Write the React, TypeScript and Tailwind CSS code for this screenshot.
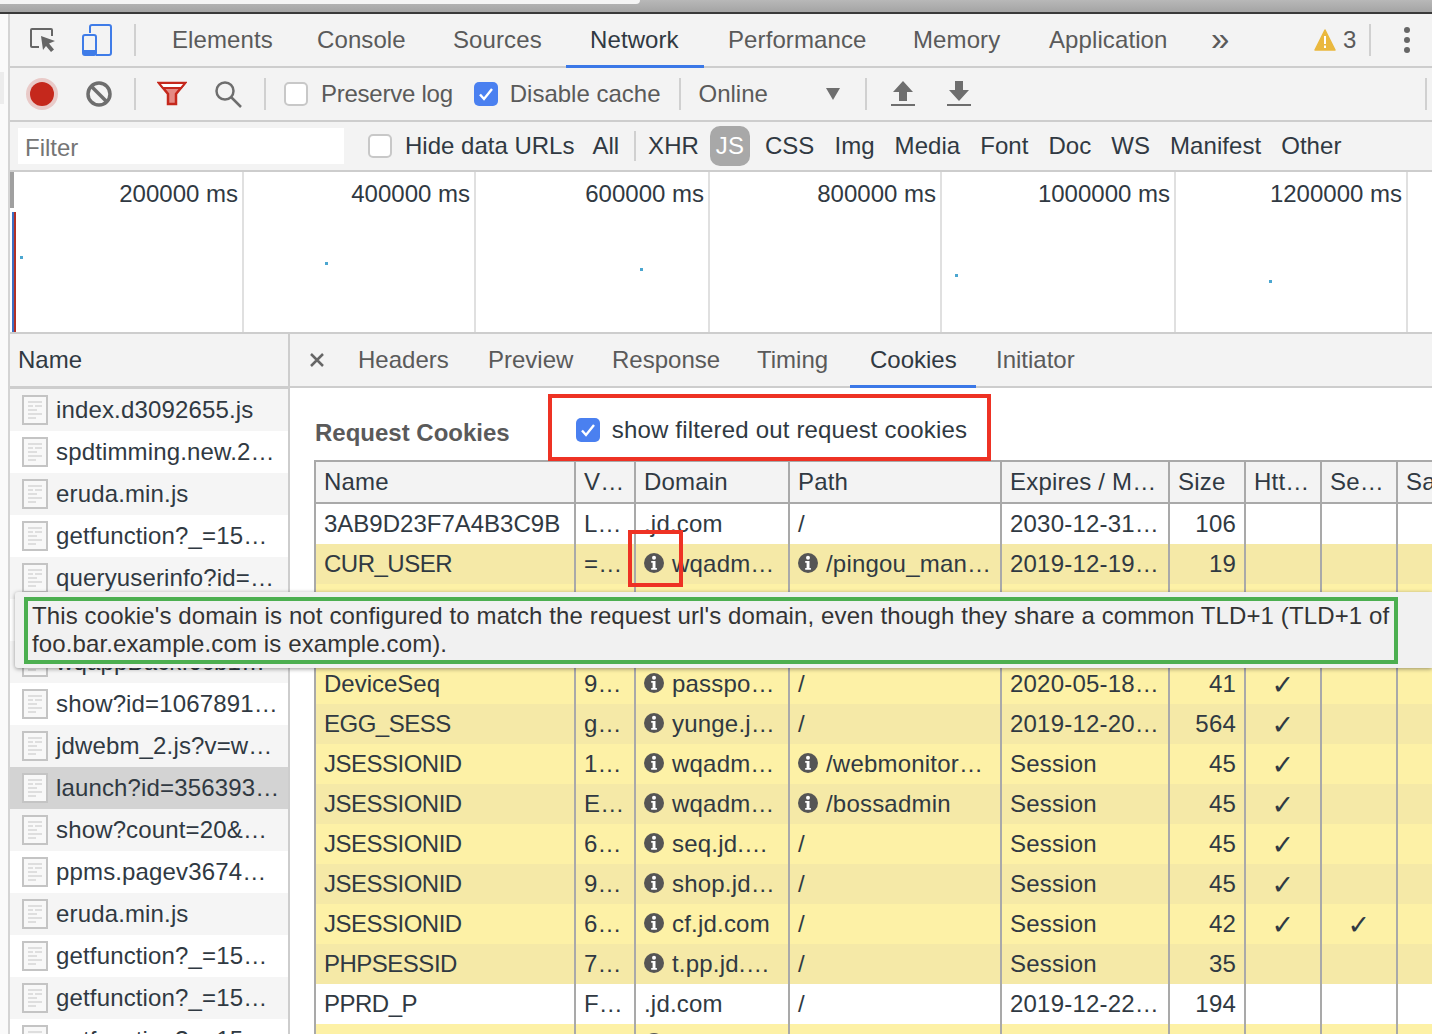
import type { ReactNode } from "react";

const listItems = [
  "index.d3092655.js",
  "spdtimming.new.2…",
  "eruda.min.js",
  "getfunction?_=15…",
  "queryuserinfo?id=…",
  "",
  "wqappBack.6cb1…",
  "show?id=1067891…",
  "jdwebm_2.js?v=w…",
  "launch?id=356393…",
  "show?count=20&…",
  "ppms.pagev3674…",
  "eruda.min.js",
  "getfunction?_=15…",
  "getfunction?_=15…",
  "getfunction?_=15…",
];

type Cookie = {
  name: string;
  value: string;
  domain: string;
  domainInfo?: boolean;
  path: string;
  pathInfo?: boolean;
  expires: string;
  size: string;
  http?: boolean;
  secure?: boolean;
  bg: string;
};

const WHITE = "bg-white";
const LIGHT = "bg-[#fdf1a6]";
const DARK = "bg-[#f5e9a7]";

const cookies: Cookie[] = [
  { name: "3AB9D23F7A4B3C9B", value: "L…", domain: ".jd.com", path: "/", expires: "2030-12-31…", size: "106", bg: WHITE },
  { name: "CUR_USER", value: "=…", domain: "wqadm…", domainInfo: true, path: "/pingou_man…", pathInfo: true, expires: "2019-12-19…", size: "19", bg: DARK },
  { name: "", value: "", domain: "", path: "", expires: "", size: "", bg: LIGHT },
  { name: "", value: "", domain: "", path: "", expires: "", size: "", bg: DARK },
  { name: "DeviceSeq", value: "9…", domain: "passpo…", domainInfo: true, path: "/", expires: "2020-05-18…", size: "41", http: true, bg: LIGHT },
  { name: "EGG_SESS", value: "g…", domain: "yunge.j…", domainInfo: true, path: "/", expires: "2019-12-20…", size: "564", http: true, bg: DARK },
  { name: "JSESSIONID", value: "1…", domain: "wqadm…", domainInfo: true, path: "/webmonitor…", pathInfo: true, expires: "Session", size: "45", http: true, bg: LIGHT },
  { name: "JSESSIONID", value: "E…", domain: "wqadm…", domainInfo: true, path: "/bossadmin", pathInfo: true, expires: "Session", size: "45", http: true, bg: DARK },
  { name: "JSESSIONID", value: "6…", domain: "seq.jd.…", domainInfo: true, path: "/", expires: "Session", size: "45", http: true, bg: LIGHT },
  { name: "JSESSIONID", value: "9…", domain: "shop.jd…", domainInfo: true, path: "/", expires: "Session", size: "45", http: true, bg: DARK },
  { name: "JSESSIONID", value: "6…", domain: "cf.jd.com", domainInfo: true, path: "/", expires: "Session", size: "42", http: true, secure: true, bg: LIGHT },
  { name: "PHPSESSID", value: "7…", domain: "t.pp.jd.…", domainInfo: true, path: "/", expires: "Session", size: "35", bg: DARK },
  { name: "PPRD_P", value: "F…", domain: ".jd.com", path: "/", expires: "2019-12-22…", size: "194", bg: WHITE },
  { name: "", value: "", domain: "", domainInfo: true, path: "", expires: "", size: "", bg: LIGHT },
];

const gridCols = "grid grid-cols-[260px_60px_154px_212px_168px_76px_76px_76px_60px]";

function InfoIcon() {
  return (
    <svg width="20" height="20" viewBox="0 0 20 20" className="-mt-[3px] shrink-0">
      <circle cx="10" cy="10" r="10" fill="#555" />
      <circle cx="10" cy="4.8" r="2" fill="#fff" />
      <path d="M7.2 8h4.3v7h1.400v1.700H7.2V15h1.400V9.700H7.2z" fill="#fff" />
    </svg>
  );
}

function DocIcon() {
  return (
    <svg width="26" height="30" viewBox="0 0 26 30" className="shrink-0">
      <rect x="1" y="1" width="24" height="28" fill="#f8f8f8" stroke="#c4c4c4" strokeWidth="2" />
      <path d="M6 7h14M6 11h5M13 11h7M6 15h9M6 19h14M6 23h8" stroke="#dedede" strokeWidth="2" />
    </svg>
  );
}

function Checkbox({ checked, className = "" }: { checked?: boolean; className?: string }) {
  if (checked) {
    return (
      <span className={`flex h-6 w-6 shrink-0 items-center justify-center rounded-[5px] bg-[#4a80f0] ${className}`}>
        <svg width="16" height="14" viewBox="0 0 16 14">
          <path d="M2 7.500l4 4.500L14 2" fill="none" stroke="#fff" strokeWidth="2.400" />
        </svg>
      </span>
    );
  }
  return <span className={`h-6 w-6 shrink-0 rounded-[5px] border-2 border-[#c8c8c8] bg-white ${className}`} />;
}

function Divider({ className = "" }: { className?: string }) {
  return <span className={`h-8 w-0.5 shrink-0 bg-[#d0d0d0] ${className}`} />;
}

function Cell({ children, right, center }: { children?: ReactNode; right?: boolean; center?: boolean }) {
  return (
    <div
      className={`flex h-10 items-center gap-2 overflow-hidden whitespace-nowrap border-r-2 border-[#a9a9a9] pl-2 pr-2 tracking-[0.2px] ${
        right ? "justify-end" : ""
      } ${center ? "justify-center pl-0 pr-0" : ""}`}
    >
      {children}
    </div>
  );
}

function Check() {
  return <span className="font-['DejaVu_Sans',sans-serif] text-[27px] font-bold leading-none text-[#303942]">✓</span>;
}

export default function App() {
  const mainTabs = [
    { label: "Elements", w: "w-[145px]" },
    { label: "Console", w: "w-[136px]" },
    { label: "Sources", w: "w-[137px]" },
    { label: "Network", w: "w-[138px]" },
    { label: "Performance", w: "w-[185px]" },
    { label: "Memory", w: "w-[136px]" },
    { label: "Application", w: "w-[186px]" },
  ];
  const filterTypes = ["XHR", "JS", "CSS", "Img", "Media", "Font", "Doc", "WS", "Manifest", "Other"];
  const subTabs = [
    { label: "Headers", w: "w-[130px]" },
    { label: "Preview", w: "w-[124px]" },
    { label: "Response", w: "w-[145px]" },
    { label: "Timing", w: "w-[113px]" },
    { label: "Cookies", w: "w-[126px]" },
    { label: "Initiator", w: "w-[124px]" },
  ];
  const ticks = [
    { label: "200000 ms", w: "w-[234px]" },
    { label: "400000 ms", w: "w-[232px]" },
    { label: "600000 ms", w: "w-[234px]" },
    { label: "800000 ms", w: "w-[232px]" },
    { label: "1000000 ms", w: "w-[234px]" },
    { label: "1200000 ms", w: "w-[232px]" },
  ];
  const dots = [
    { x: "left-[10px]", y: "top-[84px]" },
    { x: "left-[315px]", y: "top-[90px]" },
    { x: "left-[630px]", y: "top-[96px]" },
    { x: "left-[945px]", y: "top-[102px]" },
    { x: "left-[1259px]", y: "top-[108px]" },
  ];

  return (
    <div className="relative h-[1034px] w-[1432px] overflow-hidden bg-white font-['Liberation_Sans',Arial,sans-serif] text-[24px] text-[#303942]">
      {/* browser chrome edge */}
      <div className="relative h-[14px] border-b-2 border-[#3a3a3a] bg-gradient-to-b from-[#b8b8b8] to-[#a4a4a4]">
        <div className="absolute left-0 top-0 h-[4px] w-[640px] rounded-br-lg bg-[#f4f4f4]" />
      </div>

      <div className="flex h-[1020px]">
        <div className="w-[10px] shrink-0 border-r-2 border-[#d4d4d4] bg-[#fafafa] pt-[58px]">
          <div className="h-[32px] w-[4px] bg-[#ececec]" />
        </div>

        <div className="flex min-w-0 flex-1 flex-col">
          {/* main tabs */}
          <div className="flex h-[54px] items-center border-b-2 border-[#cdcdcd] bg-[#f3f3f3] tracking-[0.1px] text-[#5a5a5a]">
            <svg width="28" height="28" viewBox="0 0 28 28" className="ml-[19px] shrink-0">
              <path d="M10 21H3a1 1 0 0 1-1-1V4a1 1 0 0 1 1-1h19a1 1 0 0 1 1 1v6" fill="none" stroke="#666" strokeWidth="2" />
              <path d="M12 10l14 5-6 2.500 5 6-3 2.500-5-6-3 4z" fill="#666" />
            </svg>
            <svg width="30" height="32" viewBox="0 0 30 32" className="ml-[25px] shrink-0">
              <path d="M8 9V3a2 2 0 0 1 2-2h17a2 2 0 0 1 2 2v26a2 2 0 0 1-2 2H14" fill="none" stroke="#3f7ce8" strokeWidth="2" />
              <rect x="1" y="11" width="13" height="20" rx="2" fill="none" stroke="#3f7ce8" strokeWidth="2" />
              <rect x="1" y="26" width="13" height="5" fill="#3f7ce8" />
            </svg>
            <Divider className="ml-[22px]" />
            <div className="ml-[12px] flex h-full">
              {mainTabs.map((tab) => (
                <div
                  key={tab.label}
                  className={`relative flex h-[54px] items-center pb-[2px] pl-6 ${tab.w} ${tab.label === "Network" ? "text-[#303942]" : ""}`}
                >
                  {tab.label}
                  {tab.label === "Network" && <span className="absolute inset-x-0 bottom-0 h-[3px] bg-[#3b78e7]" />}
                </div>
              ))}
            </div>
            <span className="w-[103px] pb-[4px] text-[33px] leading-none">»</span>
            <svg width="22" height="22" viewBox="0 0 22 22" className="shrink-0">
              <path d="M11 1l10 20H1z" fill="#eab83e" stroke="#eab83e" strokeWidth="1.500" strokeLinejoin="round" />
              <path d="M10 7h2v8h-2zM10 16.500h2v2.500h-2z" fill="#fff" />
            </svg>
            <span className="ml-[7px]">3</span>
            <Divider className="ml-[13px]" />
            <div className="ml-[33px] flex flex-col gap-1">
              <span className="h-[6px] w-[6px] rounded-full bg-[#666]" />
              <span className="h-[6px] w-[6px] rounded-full bg-[#666]" />
              <span className="h-[6px] w-[6px] rounded-full bg-[#666]" />
            </div>
          </div>

          {/* toolbar */}
          <div className="flex h-[54px] items-center border-b-2 border-[#cdcdcd] bg-[#f3f3f3] text-[#5a5a5a]">
            <span className="ml-[20px] h-6 w-6 shrink-0 rounded-full bg-[#c5281c] shadow-[0_0_0_4px_rgba(197,40,28,0.2)]" />
            <svg width="28" height="28" viewBox="0 0 28 28" className="ml-[31px] shrink-0">
              <circle cx="14" cy="14" r="11" fill="none" stroke="#6e6e6e" strokeWidth="3.500" />
              <path d="M6 6l16 16" stroke="#6e6e6e" strokeWidth="3.500" />
            </svg>
            <Divider className="ml-[21px]" />
            <svg width="30" height="26" viewBox="0 0 30 26" className="ml-[21px] shrink-0">
              <path d="M2 2h26L19 13v10h-8V13z" fill="#e58a84" stroke="#c5281c" strokeWidth="2.500" />
              <path d="M2 2h26l-4 5H6z" fill="#fff" stroke="#c5281c" strokeWidth="2" />
            </svg>
            <svg width="28" height="28" viewBox="0 0 28 28" className="ml-[27px] shrink-0">
              <circle cx="11" cy="11" r="8.500" fill="none" stroke="#6e6e6e" strokeWidth="2.500" />
              <path d="M17 17l10 10" stroke="#6e6e6e" strokeWidth="2.500" />
            </svg>
            <Divider className="ml-[22px]" />
            <Checkbox className="ml-[18px]" />
            <span className="ml-[13px] whitespace-nowrap tracking-[-0.25px]">Preserve log</span>
            <Checkbox checked className="ml-[21px]" />
            <span className="ml-[12px] whitespace-nowrap">Disable cache</span>
            <Divider className="ml-[19px]" />
            <span className="ml-[17px]">Online</span>
            <svg width="14" height="12" viewBox="0 0 14 12" className="ml-[58px] shrink-0">
              <path d="M0 0h14L7 12z" fill="#6e6e6e" />
            </svg>
            <Divider className="ml-[25px]" />
            <svg width="24" height="26" viewBox="0 0 24 26" className="ml-[24px] shrink-0">
              <path d="M12 0l10 11h-6v9H8v-9H2zM0 23h24v2H0z" fill="#6e6e6e" />
            </svg>
            <svg width="24" height="26" viewBox="0 0 24 26" className="ml-[32px] shrink-0">
              <path d="M8 0h8v9h6L12 20 2 9h6zM0 23h24v2H0z" fill="#6e6e6e" />
            </svg>
            <Divider className="ml-[454px]" />
          </div>

          {/* filter row */}
          <div className="flex h-[50px] items-center border-b-2 border-[#cdcdcd] bg-[#f3f3f3]">
            <div className="ml-2 flex h-9 w-[326px] items-center bg-white pl-[7px] pt-[4px] text-[#757575]">Filter</div>
            <Checkbox className="ml-6" />
            <span className="ml-[13px] whitespace-nowrap">Hide data URLs</span>
            <span className="ml-[18px]">All</span>
            <Divider className="ml-[15px] h-[30px]" />
            <div className="ml-[12px] flex items-center gap-[20px] tracking-[0.05px]">
              {filterTypes.map((type) =>
                type === "JS" ? (
                  <span key={type} className="-ml-[9px] -mr-[5px] flex h-10 w-10 items-center justify-center rounded-[10px] bg-[#a8a8a8] text-white">
                    {type}
                  </span>
                ) : (
                  <span key={type}>{type}</span>
                )
              )}
            </div>
          </div>

          {/* timeline */}
          <div className="relative flex h-[162px] shrink-0 border-b-2 border-[#cdcdcd]">
            {ticks.map((tick) => (
              <div key={tick.label} className={`${tick.w} h-full shrink-0 border-r-2 border-[#e0e0e0] pr-[4px] pt-[4px] text-right`}>
                {tick.label}
              </div>
            ))}
            <span className="absolute left-0 top-0 h-9 w-1 bg-[#a0a0a0]" />
            <span className="absolute bottom-0 left-[2px] top-10 w-[2px] bg-[#3b6fc4]" />
            <span className="absolute bottom-0 left-1 top-10 w-[2px] bg-[#b03028]" />
            {dots.map((d) => (
              <span key={d.x} className={`absolute h-[3px] w-[3px] bg-[#4ba6d0] ${d.x} ${d.y}`} />
            ))}
          </div>

          <div className="flex min-h-0 flex-1">
            {/* request list */}
            <div className="w-[280px] shrink-0 overflow-hidden border-r-2 border-[#cdcdcd]">
              <div className="flex h-[55px] items-center border-b-[3px] border-[#cdcdcd] bg-[#f3f3f3] pl-2">Name</div>
              {listItems.map((item, i) => (
                <div
                  key={i}
                  className={`flex h-[42px] items-center gap-2 whitespace-nowrap pl-3 tracking-[0.15px] ${
                    i === 9 ? "bg-[#d3d3d3]" : i % 2 === 0 ? "bg-[#f5f5f5]" : "bg-white"
                  }`}
                >
                  <DocIcon />
                  {item}
                </div>
              ))}
            </div>

            {/* details */}
            <div className="min-w-0 flex-1 overflow-hidden">
              <div className="flex h-[54px] items-center border-b-2 border-[#cdcdcd] bg-[#f3f3f3] text-[#5a5a5a]">
                <svg width="14" height="14" viewBox="0 0 14 14" className="ml-5 shrink-0">
                  <path d="M1 1l12 12M13 1L1 13" stroke="#666" strokeWidth="2.500" />
                </svg>
                <div className="ml-[14px] flex h-full">
                  {subTabs.map((tab) => (
                    <div
                      key={tab.label}
                      className={`relative flex h-[54px] items-center pb-[2px] pl-5 ${tab.w} ${tab.label === "Cookies" ? "text-[#303942]" : ""}`}
                    >
                      {tab.label}
                      {tab.label === "Cookies" && <span className="absolute inset-x-0 bottom-0 h-[3px] bg-[#3b78e7]" />}
                    </div>
                  ))}
                </div>
              </div>

              <div className="flex h-[72px] items-center pl-[25px] pt-[11px]">
                <span className="mt-[6px] whitespace-nowrap font-bold text-[#5a5a5a]">Request Cookies</span>
                <Checkbox checked className="ml-[66px]" />
                <span className="ml-[12px] whitespace-nowrap tracking-[0.18px]">show filtered out request cookies</span>
              </div>

              <div className="ml-[24px] w-[1200px] border-l-2 border-t-2 border-[#a9a9a9]">
                <div className={`${gridCols} border-b-2 border-[#a9a9a9] bg-[#f3f3f3]`}>
                  {["Name", "V…", "Domain", "Path", "Expires / M…", "Size", "Htt…", "Se…", "Sa"].map((h) => (
                    <Cell key={h}>{h}</Cell>
                  ))}
                </div>
                {cookies.map((c, i) => (
                  <div key={i} className={`${gridCols} ${c.bg}`}>
                    <Cell>
                      {/* all-caps names run narrower in the original font */}
                      <span className={/^[A-Z_]+$/.test(c.name) ? "tracking-[-0.5px]" : "tracking-normal"}>{c.name}</span>
                    </Cell>
                    <Cell>{c.value}</Cell>
                    <Cell>
                      {c.domainInfo && <InfoIcon />}
                      {c.domain}
                    </Cell>
                    <Cell>
                      {c.pathInfo && <InfoIcon />}
                      {c.path}
                    </Cell>
                    <Cell>{c.expires}</Cell>
                    <Cell right>{c.size}</Cell>
                    <Cell center>{c.http && <Check />}</Cell>
                    <Cell center>{c.secure && <Check />}</Cell>
                    <Cell />
                  </div>
                ))}
              </div>
            </div>
          </div>
        </div>
      </div>

      {/* annotation boxes and hover tooltip */}
      <div className="pointer-events-none absolute left-[548px] top-[394px] h-[67px] w-[443px] border-4 border-[#ee3224]" />
      <div className="pointer-events-none absolute left-[628px] top-[530px] h-[57px] w-[55px] border-4 border-[#ee3224]" />
      <div className="absolute left-[15px] top-[592px] h-[76px] w-[1417px] rounded-l-[3px] bg-[#f1f1f1] pl-[9px] pt-[5px] shadow-[0_1px_4px_rgba(0,0,0,0.4)]">
        <div className="h-[67px] w-[1374px] border-4 border-[#4caf50] pl-[4px] pt-[1px] text-[24px] leading-[28px] tracking-[0.12px] text-[#333]">
          This cookie's domain is not configured to match the request url's domain, even though they share a common TLD+1 (TLD+1 of foo.bar.example.com is example.com).
        </div>
      </div>
    </div>
  );
}
